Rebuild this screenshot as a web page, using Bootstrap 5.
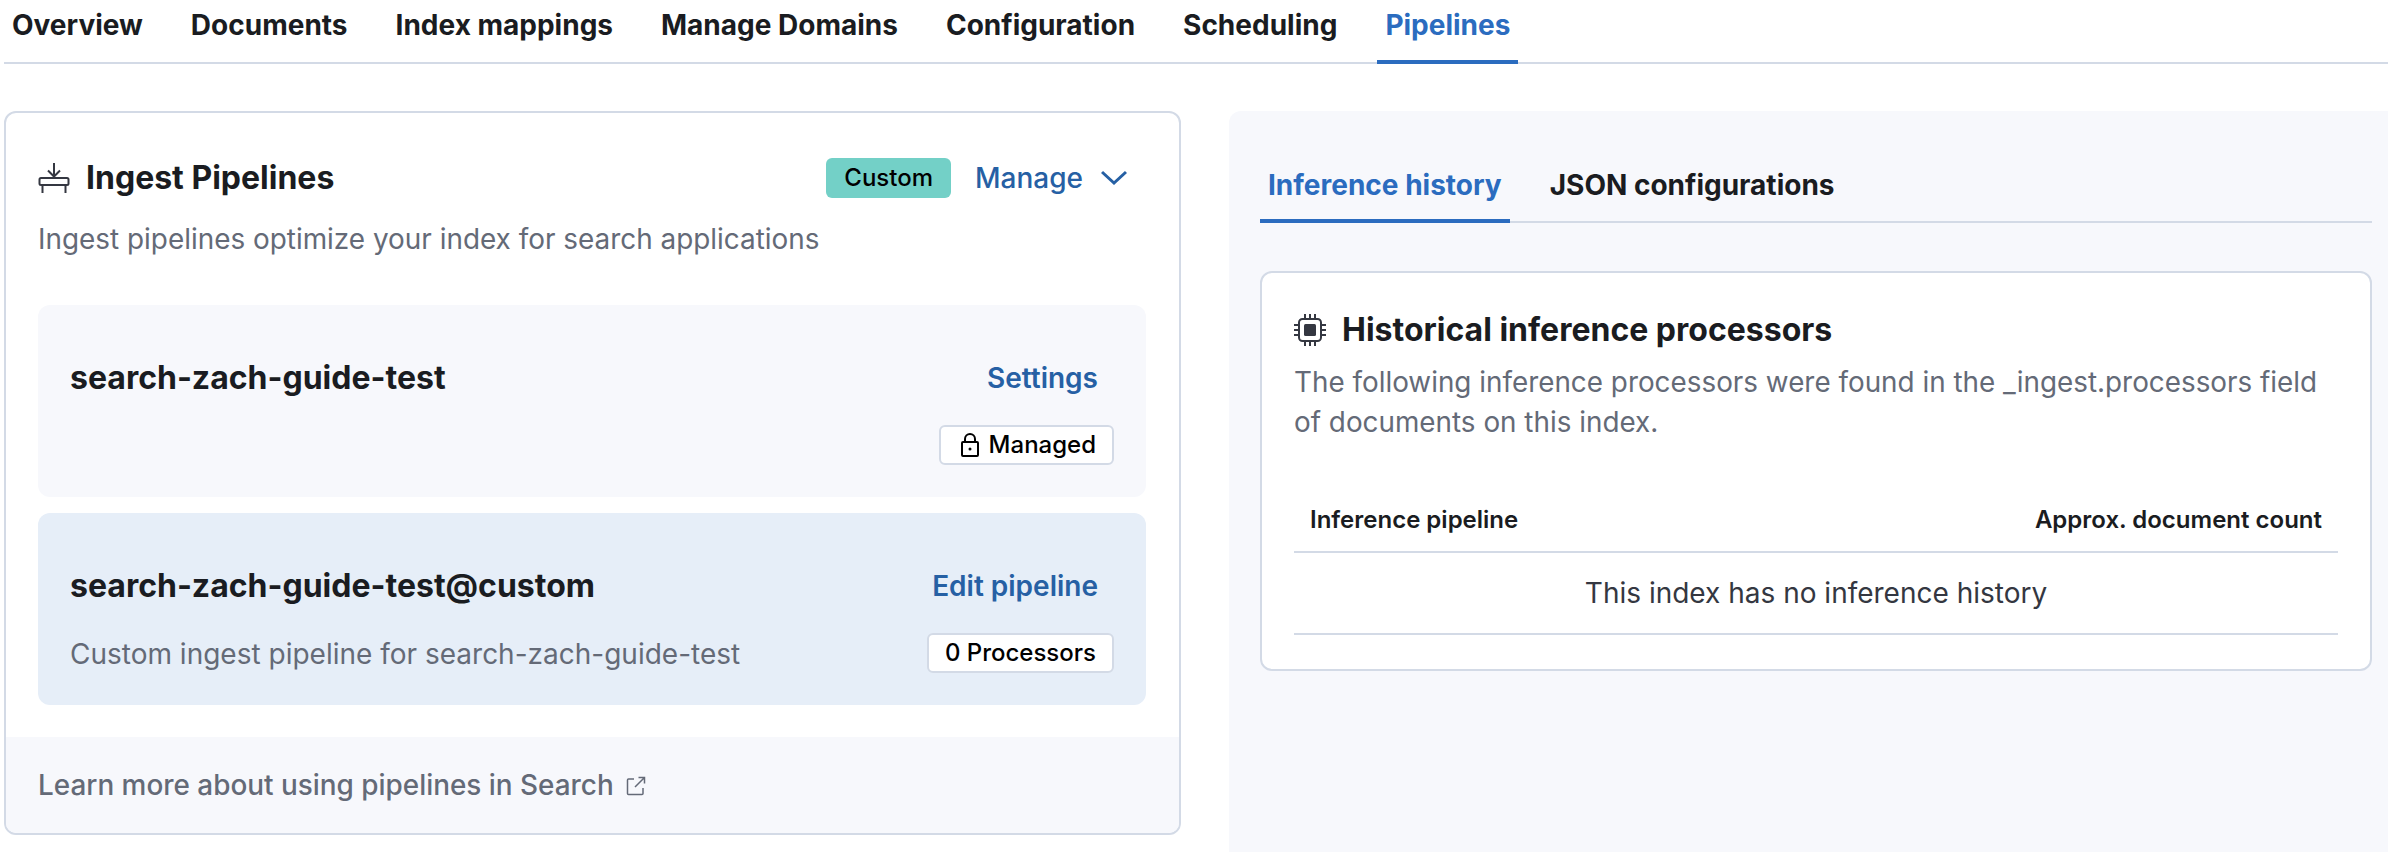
<!DOCTYPE html>
<html lang="en">
<head>
    <meta charset="UTF-8">
    <title>Pipelines</title>
    <link href="https://cdn.jsdelivr.net/npm/bootstrap@5.3.0/dist/css/bootstrap.min.css" rel="stylesheet">
    <style>
        body {
            font-family: Inter, "Liberation Sans", sans-serif;
            color: #1a1c21;
            background: #fff;
            height: 852px;
            overflow: hidden;
        }
        .page-wrap { padding-left: 4px; }
        .top-tabs {
            border-bottom: 2px solid #d3dae6;
            height: 64px;
            gap: 32px;
        }
        .top-tabs a, .sub-tabs a {
            color: #1a1c21;
            text-decoration: none;
            padding: 0 8px;
        }
        .top-tabs a {
            font-size: 28px;
            font-weight: 700;
            height: 64px;
            line-height: 50px;
        }
        .top-tabs a.is-on, .sub-tabs a.is-on {
            color: #2b6cbf;
            border-bottom: 4px solid #2b6cbf;
        }
        .main-row { margin-top: 47px; gap: 48px; }
        .left-panel {
            width: 1177px;
            height: 724px;
            border: 2px solid #d3dae6;
            border-radius: 12px;
            overflow: hidden;
        }
        .left-head { padding: 41px 32px 0 32px; height: 192px; }
        .title-row { height: 48px; }
        .panel-title { font-size: 32px; font-weight: 700; margin: 0; line-height: 48px; }
        .panel-sub { font-size: 27.9px; color: #646a77; line-height: 40px; margin-top: 17px; }
        .custom-tag {
            background: #73d0c7;
            color: #000;
            font-size: 24px;
            font-weight: 500;
            border-radius: 6px;
            padding: 0 18px;
            height: 40px;
            line-height: 40px;
        }
        .manage-link { color: #2660a4; font-size: 28px; font-weight: 500; text-decoration: none; }
        .chevron-ico { margin-left: 18px; margin-right: 20px; }
        .pipe-box {
            margin: 0 33px 0 32px;
            border-radius: 12px;
            padding: 53px 32px 0 32px;
            height: 192px;
            background: #f7f8fc;
        }
        .pipe-box + .pipe-box { margin-top: 16px; background: #e6eef8; }
        .pipe-name { font-size: 32px; font-weight: 700; line-height: 40px; }
        .pipe-link { color: #2660a4; font-size: 28px; font-weight: 600; text-decoration: none; line-height: 40px; margin-right: 16px; }
        .pipe-note { font-size: 28px; color: #646a77; line-height: 40px; margin-top: 28px; }
        .pipe-tag {
            background: #fff;
            border: 2px solid #d3dae6;
            border-radius: 6px;
            color: #000;
            font-size: 24px;
            font-weight: 500;
            height: 40px;
            line-height: 36px;
            padding: 0 16px;
            margin-top: 27px;
        }
        .lock-ico { margin-left: 4px; margin-right: 10px; }
        .left-foot {
            margin-top: 32px;
            background: #f7f8fc;
            height: 97px;
            padding: 0 32px;
            font-size: 27.9px;
            font-weight: 500;
            color: #646a77;
        }
        .ext-ico { margin-left: 12px; }
        .right-panel {
            flex: 1;
            height: 760px;
            background: #f7f8fc;
            border-radius: 12px 0 0 0;
            padding: 40px 16px 0 31px;
        }
        .sub-tabs { border-bottom: 2px solid #d3dae6; height: 72px; gap: 32px; }
        .sub-tabs a { font-size: 28px; font-weight: 700; height: 72px; line-height: 68px; }
        .infer-card {
            margin-top: 48px;
            background: #fff;
            border: 2px solid #d3dae6;
            border-radius: 12px;
            height: 400px;
            padding: 33px 32px 0 32px;
        }
        .infer-text { font-size: 27.85px; color: #646a77; line-height: 40px; margin-top: 8px; }
        .infer-head {
            margin-top: 47px;
            height: 64px;
            padding: 0 16px;
            font-size: 24px;
            font-weight: 600;
            border-bottom: 2px solid #d3dae6;
        }
        .infer-empty {
            height: 82px;
            font-size: 28px;
            color: #343741;
            border-bottom: 2px solid #d3dae6;
        }
    </style>
</head>
<body>
    <div class="page-wrap">
        <nav class="top-tabs d-flex">
            <a href="#">Overview</a>
            <a href="#">Documents</a>
            <a href="#">Index mappings</a>
            <a href="#">Manage Domains</a>
            <a href="#">Configuration</a>
            <a href="#">Scheduling</a>
            <a href="#" class="is-on">Pipelines</a>
        </nav>

        <div class="main-row d-flex">
            <section class="left-panel bg-white">
                <div class="left-head">
                    <div class="title-row d-flex align-items-center">
                        <svg class="me-3" width="32" height="32" viewBox="0 0 32 32" fill="none" stroke="#343741" stroke-width="2">
                            <path d="M16 1v13M10 8.500l6 6 6-6"/>
                            <rect x="1.500" y="16" width="29" height="7" rx="1.500"/>
                            <path d="M4.500 23v8M27.500 23v8"/>
                        </svg>
                        <h2 class="panel-title">Ingest Pipelines</h2>
                        <span class="custom-tag ms-auto">Custom</span>
                        <a href="#" class="manage-link ms-4">Manage</a>
                        <svg class="chevron-ico" width="26" height="16" viewBox="0 0 26 16" fill="none" stroke="#2660a4" stroke-width="3">
                            <path d="M1 2l12 11L25 2"/>
                        </svg>
                    </div>
                    <div class="panel-sub">Ingest pipelines optimize your index for search applications</div>
                </div>

                <div class="pipe-box d-flex justify-content-between">
                    <div class="pipe-name">search-zach-guide-test</div>
                    <div class="d-flex flex-column align-items-end">
                        <a href="#" class="pipe-link">Settings</a>
                        <span class="pipe-tag d-flex align-items-center">
                            <svg class="lock-ico" width="18" height="24" viewBox="0 0 18 24" fill="none" stroke="#000" stroke-width="2">
                                <rect x="1" y="9" width="16" height="14" rx="1"/>
                                <path d="M4 9V6a5 5 0 0 1 10 0v3"/>
                                <circle cx="9" cy="16" r="1.500" fill="#000" stroke="none"/>
                            </svg>
                            Managed
                        </span>
                    </div>
                </div>

                <div class="pipe-box d-flex justify-content-between">
                    <div>
                        <div class="pipe-name">search-zach-guide-test@custom</div>
                        <div class="pipe-note">Custom ingest pipeline for search-zach-guide-test</div>
                    </div>
                    <div class="d-flex flex-column align-items-end">
                        <a href="#" class="pipe-link">Edit pipeline</a>
                        <span class="pipe-tag">0 Processors</span>
                    </div>
                </div>

                <div class="left-foot d-flex align-items-center">
                    Learn more about using pipelines in Search
                    <svg class="ext-ico" width="20" height="20" viewBox="0 0 20 20" fill="none" stroke="#646a77" stroke-width="1.500">
                        <path d="M8 3H2.500a1 1 0 0 0-1 1v13.500a1 1 0 0 0 1 1H16a1 1 0 0 0 1-1V12"/>
                        <path d="M9 11l9.500-9.500M12.500 1.500h6v6"/>
                    </svg>
                </div>
            </section>

            <section class="right-panel">
                <nav class="sub-tabs d-flex">
                    <a href="#" class="is-on">Inference history</a>
                    <a href="#">JSON configurations</a>
                </nav>
                <div class="infer-card">
                    <div class="d-flex align-items-center">
                        <svg class="me-3" width="32" height="32" viewBox="0 0 32 32" fill="none" stroke="#343741" stroke-width="2">
                            <rect x="5" y="5" width="22" height="22" rx="3.500"/>
                            <rect x="10" y="10" width="12" height="12" rx="1.500" fill="#343741" stroke="none"/>
                            <path d="M11 0v4M16 0v4M21 0v4M11 28v4M16 28v4M21 28v4M0 11h4M0 16h4M0 21h4M28 11h4M28 16h4M28 21h4"/>
                        </svg>
                        <h2 class="panel-title">Historical inference processors</h2>
                    </div>
                    <div class="infer-text">The following inference processors were found in the _ingest.processors field<br>of documents on this index.</div>
                    <div class="infer-head d-flex justify-content-between align-items-center">
                        <span>Inference pipeline</span>
                        <span>Approx. document count</span>
                    </div>
                    <div class="infer-empty d-flex justify-content-center align-items-center">This index has no inference history</div>
                </div>
            </section>
        </div>
    </div>
    <script src="https://cdn.jsdelivr.net/npm/bootstrap@5.3.0/dist/js/bootstrap.bundle.min.js"></script>
</body>
</html>
